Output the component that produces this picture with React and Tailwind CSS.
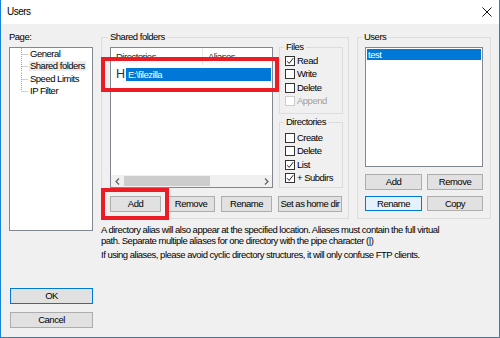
import React from 'react';

const Check = () => (
  <svg width="8" height="8" viewBox="0 0 8 8" className="block">
    <path d="M1 4.2 L3.2 6.4 L7.2 1.2" fill="none" stroke="#222" strokeWidth="1" />
  </svg>
);

function Checkbox({ label, checked, disabled }) {
  return (
    <div className="flex items-center h-[13.5px] pl-[5px]">
      <div
        className={
          disabled
            ? 'w-[10px] h-[10px] border border-[#cccccc] bg-white flex items-center justify-center'
            : 'w-[10px] h-[10px] border border-[#333333] bg-white flex items-center justify-center'
        }
      >
        {checked && <Check />}
      </div>
      <span className={disabled ? 'ml-[2px] text-[#a0a0a0]' : 'ml-[2px]'}>{label}</span>
    </div>
  );
}

function Button({ children, className = '', focused }) {
  return (
    <div
      className={
        (focused
          ? 'bg-[#e5f1fb] border border-[#0078d7] '
          : 'bg-[#e1e1e1] border border-[#adadad] ') +
        'flex items-center justify-center ' +
        className
      }
    >
      {children}
    </div>
  );
}

// tree connector drawn as dots
function TreeItem({ label, last, selected }) {
  return (
    <div className="flex items-center h-[12.3px]">
      <svg width="19" height="12.3" className="block shrink-0">
        <line x1="11.5" y1="0" x2="11.5" y2={last ? 6 : 12.3} stroke="#a0a0a0" strokeDasharray="1 1" />
        <line x1="11.5" y1="6.5" x2="18" y2="6.5" stroke="#a0a0a0" strokeDasharray="1 1" />
      </svg>
      <span className={selected ? 'bg-[#ececec] px-[1px]' : 'px-[1px]'}>{label}</span>
    </div>
  );
}

export default function App() {
  return (
    <div className="relative w-[500px] h-[338px] bg-[#f0f0f0] border-x border-b border-[#1883d7] font-['Liberation_Sans',Arial,sans-serif] text-[9.5px] tracking-[-0.5px] text-black leading-[10px] overflow-hidden">
      {/* title bar */}
      <div className="h-[24px] bg-white flex items-center pl-[6px] pr-[7px]">
        <span className="text-[10px]">Users</span>
        <svg width="10" height="10" viewBox="0 0 10 10" className="ml-auto block">
          <path d="M0.5 0.5 L9.5 9.5 M9.5 0.5 L0.5 9.5" stroke="#111" strokeWidth="1" />
        </svg>
      </div>

      <div className="flex pt-[8px]">
        {/* left column */}
        <div className="ml-[8px] w-[84px] flex flex-col">
          <div className="h-[10px]">Page:</div>
          <div className="mt-[5px] h-[184px] bg-white border border-[#828790] pt-[0px]">
            <TreeItem label="General" />
            <TreeItem label="Shared folders" selected />
            <TreeItem label="Speed Limits" />
            <TreeItem label="IP Filter" last />
          </div>
          <Button className="mt-[57px] ml-[1px] w-[83px] h-[16px] !border-[#0078d7]">OK</Button>
          <Button className="mt-[8px] ml-[1px] w-[83px] h-[16px]">Cancel</Button>
        </div>

        {/* right area */}
        <div className="ml-[8px] flex flex-col">
          <div className="flex">
            {/* Shared folders */}
            <fieldset className="w-[248px] h-[187px] border border-[#dcdcdc]">
              <legend className="ml-[6px] px-[2px] h-[10px]">Shared folders</legend>
              <div className="flex pl-[8px]">
                {/* list */}
                <div className="mt-[5px] w-[163px] h-[141px] bg-white border border-[#828790] flex flex-col">
                  <div className="flex h-[17px] items-center text-[#222]">
                    <div className="w-[92px] h-full border-r border-[#e5e5e5] pl-[5px] flex items-center">Directories</div>
                    <div className="pl-[5px]">Aliases</div>
                  </div>
                  <div className="flex items-center mt-[3px] h-[13px] pl-[5px]">
                    <span className="text-[12.5px] leading-[13px] text-[#1c2f5e] tracking-normal w-[10px]">H</span>
                    <div className="flex-1 h-[13px] mr-[1px] bg-[#0078d7] text-white flex items-center pl-[2px]">E:\filezilla</div>
                  </div>
                  <div className="mt-auto h-[12px] flex items-center bg-[#f0f0f0]">
                    <div className="w-[12px] flex justify-center">
                      <svg width="5" height="7" viewBox="0 0 5 7" className="block">
                        <path d="M4 0.5 L1 3.5 L4 6.5" fill="none" stroke="#606060" strokeWidth="1.2" />
                      </svg>
                    </div>
                    <div className="flex-1 h-full flex items-center">
                      <div className="ml-[1px] w-[86px] h-[10px] bg-[#cdcdcd]" />
                    </div>
                    <div className="w-[12px] flex justify-center">
                      <svg width="5" height="7" viewBox="0 0 5 7" className="block">
                        <path d="M1 0.5 L4 3.5 L1 6.5" fill="none" stroke="#606060" strokeWidth="1.2" />
                      </svg>
                    </div>
                  </div>
                </div>

                {/* permissions */}
                <div className="ml-[6px] w-[64px] flex flex-col">
                  <fieldset className="h-[72px] border border-[#dcdcdc]">
                    <legend className="ml-[4px] px-[2px] h-[10px]">Files</legend>
                    <div className="pt-[2px]">
                      <Checkbox label="Read" checked />
                      <Checkbox label="Write" />
                      <Checkbox label="Delete" />
                      <Checkbox label="Append" disabled />
                    </div>
                  </fieldset>
                  <fieldset className="mt-[3px] h-[71px] border border-[#dcdcdc]">
                    <legend className="ml-[4px] px-[2px] h-[10px]">Directories</legend>
                    <div className="pt-[4px]">
                      <Checkbox label="Create" />
                      <Checkbox label="Delete" />
                      <Checkbox label="List" checked />
                      <Checkbox label="+ Subdirs" checked />
                    </div>
                  </fieldset>
                </div>
              </div>
              <div className="flex mt-[8px] pl-[8px] gap-[6px]">
                <Button className="w-[51px] h-[16px]">Add</Button>
                <Button className="w-[48px] h-[16px]">Remove</Button>
                <Button className="w-[51px] h-[16px]">Rename</Button>
                <Button className="w-[64px] h-[16px]">Set as home dir</Button>
              </div>
            </fieldset>

            {/* Users */}
            <fieldset className="ml-[8px] w-[134px] h-[187px] border border-[#dcdcdc]">
              <legend className="ml-[4px] px-[2px] h-[10px]">Users</legend>
              <div className="pl-[7px] pr-[7px]">
                <div className="mt-[5px] h-[120px] bg-white border border-[#828790]">
                  <div className="mt-[1px] mx-[1px] h-[11px] bg-[#0078d7] text-white flex items-center pl-[1px]">test</div>
                </div>
                <div className="flex gap-[5px] mt-[7px]">
                  <Button className="w-[57px] h-[16px]">Add</Button>
                  <Button className="w-[56px] h-[16px]">Remove</Button>
                </div>
                <div className="flex gap-[5px] mt-[6px]">
                  <Button focused className="w-[57px] h-[15px]">Rename</Button>
                  <Button className="w-[56px] h-[15px]">Copy</Button>
                </div>
              </div>
            </fieldset>
          </div>

          <div className="mt-[5px] leading-[11px]">
            <div>A directory alias will also appear at the specified location. Aliases must contain the full virtual</div>
            <div>path. Separate multiple aliases for one directory with the pipe character (|)</div>
            <div className="mt-[3px]">If using aliases, please avoid cyclic directory structures, it will only confuse FTP clients.</div>
          </div>
        </div>
      </div>

      {/* red annotation boxes */}
      <div className="absolute left-[100px] top-[57px] w-[178px] h-[35px] border-4 border-[#ed1c24]" />
      <div className="absolute left-[100px] top-[188px] w-[68px] h-[32px] border-4 border-[#ed1c24]" />
    </div>
  );
}
